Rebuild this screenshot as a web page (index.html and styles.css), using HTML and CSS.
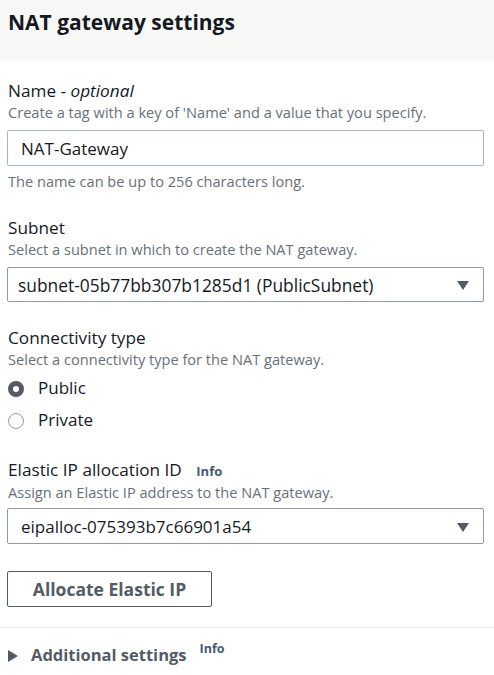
FILE: index.html
```html
<!DOCTYPE html>
<html>
<head>
<meta charset="utf-8">
<link rel="stylesheet" href="styles.css">
</head>
<body>
<div class="header"><h2 class="title">NAT gateway settings</h2></div>
<div class="content">
  <div class="field f-name">
    <div class="label">Name - <i>optional</i></div>
    <div class="desc">Create a tag with a key of 'Name' and a value that you specify.</div>
    <div class="input">NAT-Gateway</div>
    <div class="hint">The name can be up to 256 characters long.</div>
  </div>
  <div class="field f-subnet">
    <div class="label">Subnet</div>
    <div class="desc">Select a subnet in which to create the NAT gateway.</div>
    <div class="input select subnet"><span>subnet-05b77bb307b1285d1 (PublicSubnet)</span><span class="caret"></span></div>
  </div>
  <div class="field f-conn">
    <div class="label">Connectivity type</div>
    <div class="desc">Select a connectivity type for the NAT gateway.</div>
    <div class="radios">
      <div class="radio"><span class="dot on"></span><span>Public</span></div>
      <div class="radio"><span class="dot"></span><span>Private</span></div>
    </div>
  </div>
  <div class="field f-eip">
    <div class="label">Elastic IP allocation ID <span class="info">Info</span></div>
    <div class="desc">Assign an Elastic IP address to the NAT gateway.</div>
    <div class="input select"><span>eipalloc-075393b7c66901a54</span><span class="caret"></span></div>
  </div>
  <button class="btn">Allocate Elastic IP</button>
</div>
<div class="divider"></div>
<div class="expander">
  <span class="tri"></span><span class="exp-title">Additional settings</span><span class="info sup">Info</span>
</div>
</body>
</html>
```
FILE: styles.css
```css
html, body { margin: 0; padding: 0; background: #fff; }
body {
  font-family: "Open Sans", "Noto Sans", sans-serif;
  color: #16191f;
  width: 494px;
}
.header {
  background: #f8f9f7;
  height: 61px;
  padding: 8px 8px 0;
  box-sizing: border-box;
}
.title {
  margin: 0;
  font-size: 21px;
  font-weight: 700;
  line-height: 28px;
  color: #16191f;
}
.content {
  padding: 19px 10px 0 7px;
}
.field { display: flex; flex-direction: column; }
.f-subnet { margin-top: 26px; }
.f-conn { margin-top: 25px; }
.f-eip { margin-top: 28px; }
.label {
  font-size: 17.2px;
  line-height: 22px;
  padding-left: 1px;
  display: flex;
  align-items: baseline;
  white-space: pre;
}
.label i { font-style: italic; }
.desc {
  font-size: 14.6px;
  line-height: 20px;
  color: #687078;
  padding-left: 1px;
  margin-bottom: 8px;
}
.f-eip .desc { margin-bottom: 6px; }
.input {
  height: 36px;
  box-sizing: border-box;
  border: 1px solid #aab7b8;
  border-radius: 2px;
  padding: 0 13px;
  display: flex;
  align-items: center;
  font-size: 17px;
  color: #16191f;
}
.select { justify-content: space-between; padding: 0 14px 0 13px; border-color: #8d99a8; }
.select.subnet { padding-left: 10px; height: 35px; font-size: 17.4px; }
.caret {
  width: 0; height: 0;
  border-left: 6px solid transparent;
  border-right: 6px solid transparent;
  border-top: 9px solid #545b64;
  margin-top: 2px;
}
.hint {
  font-size: 14.6px;
  line-height: 20px;
  color: #687078;
  margin-top: 5px;
  padding-left: 1px;
}
.radios { display: flex; flex-direction: column; gap: 10px; margin-top: 0; }
.radio { display: flex; align-items: center; gap: 14px; font-size: 17px; line-height: 22px; padding-left: 1px; }
.dot {
  width: 16px; height: 16px; box-sizing: border-box;
  border-radius: 50%;
  border: 1px solid #8ba0b4;
  margin-top: 1px;
}
.dot.on { border: 5px solid #545b64; }
.info {
  font-size: 13px;
  font-weight: 700;
  color: #44597a;
  margin-left: 10px;
}
.btn {
  display: block;
  font-family: inherit;
  width: 205px;
  height: 36px;
  background: #fff;
  border: 1px solid #545b64;
  border-radius: 2px;
  font-size: 17.5px;
  font-weight: 700;
  color: #545b64;
  margin-top: 27px;
  padding: 0;
}
.divider { height: 1px; background: #eff1ef; margin-top: 20px; }
.expander {
  display: flex;
  align-items: flex-start;
  padding: 15px 8px 0;
}
.tri {
  width: 0; height: 0;
  border-top: 6px solid transparent;
  border-bottom: 6px solid transparent;
  border-left: 10px solid #545b64;
  margin-top: 7px;
  margin-right: 13px;
}
.exp-title { font-size: 16.5px; font-weight: 700; color: #545b64; line-height: 24px; }
.sup { margin-left: 13px; margin-top: -2px; font-size: 12.5px; line-height: 16px; }
```
